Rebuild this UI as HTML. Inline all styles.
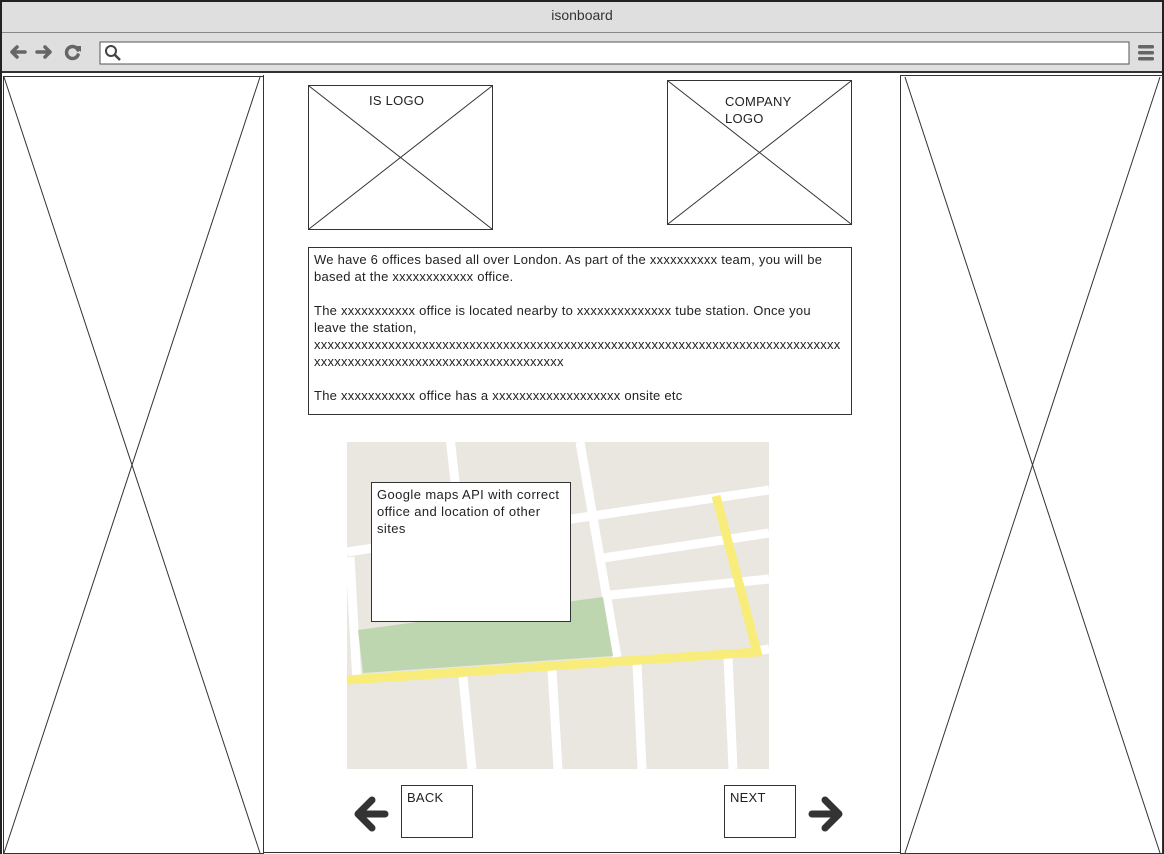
<!DOCTYPE html>
<html><head><meta charset="utf-8"><style>
*{margin:0;padding:0;box-sizing:border-box}
body{width:1164px;height:854px;background:#fff;font-family:"Liberation Sans",sans-serif;position:relative;overflow:hidden;color:#222}
.abs{position:absolute}
.box{position:absolute;border:1px solid #333;background:#fff}
.t{font-size:13px;line-height:17px;color:#222;letter-spacing:0.25px}
</style></head><body>
<div class="abs" style="left:0;top:0;width:1164px;height:854px;border:2px solid #222;border-bottom:none"></div>
<div class="abs" style="left:2px;top:2px;width:1160px;height:31px;background:#dfdfdf;border-bottom:1px solid #888;text-align:center;font-size:14px;line-height:26px;color:#333">isonboard</div>
<div class="abs" style="left:2px;top:33px;width:1160px;height:40px;background:#dfdfdf;border-bottom:2px solid #333"></div>
<svg class="abs" style="left:0;top:0" width="1164" height="854">
<g stroke="#666" stroke-width="3.5" fill="none" stroke-linecap="round" stroke-linejoin="round">
<path d="M25 52H12M17 47l-5 5 5 5"/><path d="M37 52H50M45 47l5 5-5 5"/>
<path d="M78 50a6 6 0 1 0 0 5"/></g>
<path d="M75 46l6 0 0 6z" fill="#666"/>
<rect x="100" y="42" width="1029" height="22" fill="#fff" stroke="#555"/>
<circle cx="111" cy="51" r="5" fill="none" stroke="#444" stroke-width="2"/><path d="M115 55l5 5" stroke="#444" stroke-width="2.5"/>
<g fill="#666"><rect x="1138" y="45" width="16" height="3.5" rx="1.5"/><rect x="1138" y="51" width="16" height="3.5" rx="1.5"/><rect x="1138" y="57" width="16" height="3.5" rx="1.5"/></g>
<g stroke="#333" fill="none" stroke-width="1">
<rect x="3.5" y="76.5" width="260" height="777"/><path d="M4 77L260 853M260 77L4 853"/>
<rect x="900.5" y="75.5" width="262" height="778"/><path d="M905 77L1160 853M1160 77L905 853"/>
<path d="M263.5 75V852.5H900"/>
<rect x="308.5" y="85.5" width="184" height="144"/><path d="M309 86L492 229M492 86L309 229"/>
<rect x="667.5" y="80.5" width="184" height="144"/><path d="M668 81L851 224M851 81L668 224"/>
</g>
<g transform="translate(347 442)">
<rect width="422" height="327" fill="#eae7e1"/>
<g stroke="#fff" stroke-width="9" fill="none">
<path d="M103 -5L116 110"/><path d="M233 0L270 215"/>
<path d="M0 110L422 48"/><path d="M256 116L422 91"/><path d="M263 153L422 137"/><path d="M410 209L422 207"/>
<path d="M3 115L10 240"/>
<path d="M116 235L125 327"/><path d="M205 228L211 327"/><path d="M290 221L295 327"/><path d="M381 215L386 327"/>
</g>
<path d="M11 188L256 155L266 214L16 231Z" fill="#bed6b0"/>
<path d="M0 238L410 210L369 54" stroke="#f8ec7a" stroke-width="9" fill="none"/>
</g>
<g fill="#333" stroke="#333" stroke-width="7" stroke-linecap="round" stroke-linejoin="round">
<path d="M385 814H360M372 800l-14 14 14 14" fill="none"/>
<path d="M812 814H837M825 800l14 14-14 14" fill="none"/>
</g>
</svg>
<div class="t abs" style="left:369px;top:92px">IS LOGO</div>
<div class="t abs" style="left:725px;top:93px">COMPANY<br>LOGO</div>
<div class="box t" style="left:308px;top:247px;width:544px;height:168px;padding:3px 5px;overflow-wrap:anywhere">We have 6 offices based all over London. As part of the xxxxxxxxxx team, you will be based at the xxxxxxxxxxxx office.<br><br>The xxxxxxxxxxx office is located nearby to xxxxxxxxxxxxxx tube station. Once you leave the station, xxxxxxxxxxxxxxxxxxxxxxxxxxxxxxxxxxxxxxxxxxxxxxxxxxxxxxxxxxxxxxxxxxxxxxxxxxxxxxxxxxxxxxxxxxxxxxxxxxxxxxxxxxxxxxxxxxx<br><br>The xxxxxxxxxxx office has a xxxxxxxxxxxxxxxxxxx onsite etc</div>
<div class="box t" style="left:371px;top:482px;width:200px;height:140px;padding:3px 5px 3px 5px;letter-spacing:0.4px">Google maps API with correct office and location of other sites</div>
<div class="box t" style="left:401px;top:785px;width:72px;height:53px;padding:3px 5px">BACK</div>
<div class="box t" style="left:724px;top:785px;width:72px;height:53px;padding:3px 5px">NEXT</div>
</body></html>
